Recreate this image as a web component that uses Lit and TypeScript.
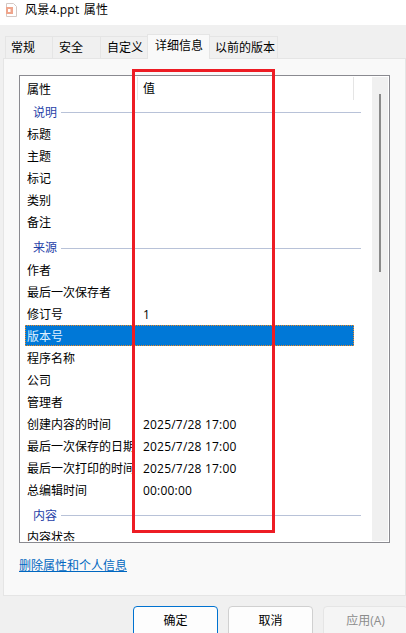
import { LitElement, html, css } from "lit";
import { customElement } from "lit/decorators.js";

type Row = { k: string; v?: string; group?: boolean; sel?: boolean; cls?: string };
const rows: Row[] = [
  { k: "说明", group: true, cls: "g1" },
  { k: "标题" }, { k: "主题" }, { k: "标记" }, { k: "类别" }, { k: "备注" },
  { k: "来源", group: true, cls: "g2" },
  { k: "作者" }, { k: "最后一次保存者" }, { k: "修订号", v: "1" },
  { k: "版本号", sel: true },
  { k: "程序名称" }, { k: "公司" }, { k: "管理者" },
  { k: "创建内容的时间", v: "2025/7/28 17:00" },
  { k: "最后一次保存的日期", v: "2025/7/28 17:00" },
  { k: "最后一次打印的时间", v: "2025/7/28 17:00" },
  { k: "总编辑时间", v: "00:00:00" },
  { k: "内容", group: true, cls: "g3" },
  { k: "内容状态" },
];

const tabs = [
  { t: "常规", w: 48 }, { t: "安全", w: 49 }, { t: "自定义", w: 48 },
  { t: "详细信息", w: 63, on: true }, { t: "以前的版本", w: 69 },
];

@customElement("app-root")
export class AppRoot extends LitElement {
  static styles = css`
    :host {
      display: block; width: 406px; height: 633px; overflow: hidden; position: relative;
      background: #f0f0f0; color: #000;
      font: 12px/16px "Open Sans", "Noto Sans CJK SC", sans-serif;
    }
    * { box-sizing: border-box; }
    .title { height: 25px; background: #fff; display: flex; align-items: center; padding: 0 0 5px 5px; gap: 7px; word-spacing: 1px; letter-spacing: .2px; }
    .title svg { flex: none; }
    .tabs { height: 33px; display: flex; align-items: flex-end; padding-left: 5px; }
    .tab { height: 22px; padding: 0 0 0 6px; border: 1px solid #e5e5e5; border-bottom: none; margin-right: -1px; background: #f0f0f0; display: flex; align-items: center; white-space: nowrap; }
    .tab:first-child, .tab:last-child { padding-left: 5px; }
    .tab.on { height: 25px; background: #f9f9f9; margin-bottom: -1px; position: relative; z-index: 1; padding: 0 0 2px 7px; }
    .panel { margin-left: 3px; width: 403px; height: 538px; background: #f9f9f9; border: 1px solid #e5e5e5; padding: 16px 15px 0; }
    .list { width: 371px; height: 468px; background: #fff; border: 1px solid #8a8a90; padding: 1px 1px 1px 0; display: flex; overflow: hidden; }
    .body { width: 352px; height: 464px; flex: none; overflow: hidden; }
    .head { height: 23px; display: flex; align-items: center; padding: 0 0 0 7px; }
    .head .c1 { width: 110px; padding-top: 2px; }
    .head .c2 { flex: 1; border-left: 1px solid #e5e5e5; height: 23px; line-height: 24px; padding-left: 5px; }
    .head .end { width: 19px; height: 23px; border-left: 1px solid #e5e5e5; }
    .row { height: 22px; display: flex; align-items: center; padding: 2px 0 0 7px; white-space: nowrap; }
    .row .k { width: 116px; flex: none; overflow: hidden; }
    .row .v { letter-spacing: .2px; }
    .row.sel { background: #0078d7; color: #dff0ff; outline: 1px dotted #f08a20; outline-offset: -1px; margin: 0 18px 1px 5px; padding-left: 2px; height: 21px; }
    .group { display: flex; align-items: center; padding-left: 13px; color: #1f3fa8; gap: 4px; }
    .g1 { height: 23px; padding-top: 2px; }
    .g2 { height: 26px; padding-top: 4px; }
    .g3 { height: 25px; padding-top: 4px; }
    .group i { display: block; height: 1px; flex: 1; background: #b8c2d8; margin: 0 11px 0 0; }
    .scroll { flex: none; width: 16px; background: #f0f0f0; padding: 17px 0 0 7px; }
    .thumb { width: 2px; height: 178px; background: #8a8a8a; }
    .link { display: block; margin-top: 15px; color: #0067c0; text-decoration: underline; }
    .btns { display: flex; gap: 10px; padding: 10px 0 0 133px; width: 500px; }
    .btn { width: 85px; height: 32px; background: #fdfdfd; border: 1px solid #d0d0d0; border-radius: 4px; display: flex; align-items: center; justify-content: center; padding-bottom: 3px; }
    .btn.def { border-color: #0072d0; }
    .btn.off { background: #f5f5f5; border-color: #e5e5e5; color: #8c8c8c; }
    .mark { position: absolute; left: 132px; top: 69px; width: 143px; height: 464px; border: 3px solid #ed1c24; pointer-events: none; }
  `;

  render() {
    return html`
      <div class="title">
        <svg width="13" height="14" viewBox="0 0 13 14">
          <path d="M1.5.5h7l3 3v10h-10z" fill="#fff" stroke="#d4c8c4"/>
          <rect x="1" y="4" width="7" height="7" fill="#efa58c"/>
          <rect x="3" y="6" width="2.5" height="3" fill="#fff"/>
        </svg>
        <span>风景4.ppt 属性</span>
      </div>
      <div class="tabs">
        ${tabs.map((t) => html`<div class="tab ${t.on ? "on" : ""}" style="width:${t.w}px">${t.t}</div>`)}
      </div>
      <div class="panel">
        <div class="list">
          <div class="body">
            <div class="head"><div class="c1">属性</div><div class="c2">值</div><div class="end"></div></div>
            ${rows.map((r) =>
              r.group
                ? html`<div class="group ${r.cls}"><span>${r.k}</span><i></i></div>`
                : html`<div class="row ${r.sel ? "sel" : ""}"><span class="k">${r.k}</span><span class="v">${r.v ?? ""}</span></div>`
            )}
          </div>
          <div class="scroll"><div class="thumb"></div></div>
        </div>
        <a class="link">删除属性和个人信息</a>
      </div>
      <div class="btns">
        <div class="btn def">确定</div><div class="btn">取消</div><div class="btn off">应用(A)</div>
      </div>
      <div class="mark"></div>
    `;
  }
}
